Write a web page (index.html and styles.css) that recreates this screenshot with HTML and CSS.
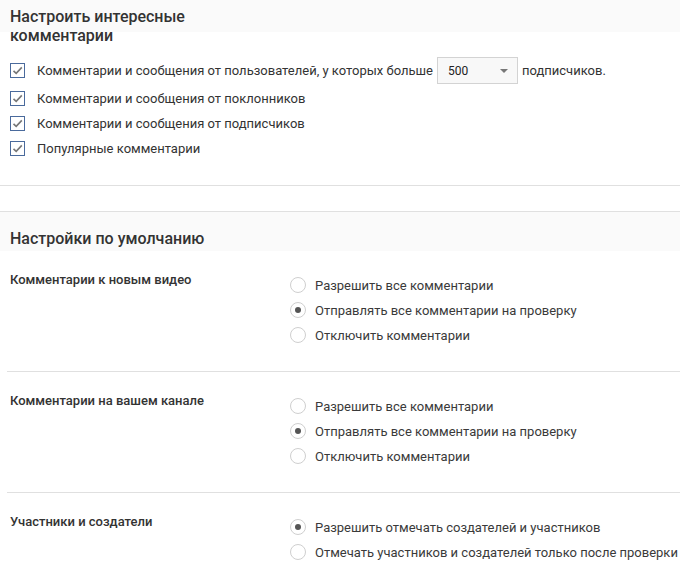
FILE: index.html
```html
<!DOCTYPE html>
<html lang="ru">
<head>
<meta charset="utf-8">
<link rel="stylesheet" href="styles.css">
</head>
<body>
<div class="head head-first"><h2 class="title title-wrap">Настроить интересные комментарии</h2></div>
<div class="checks">
  <div class="check-row check-row-tall">
    <span class="cbox"><svg width="13" height="13" viewBox="0 0 13 13"><path d="M2.5 6.8 L5.2 9.4 L10.8 3.4" fill="none" stroke="#777" stroke-width="1.6"/></svg></span>
    <span class="ctext">Комментарии и сообщения от пользователей, у которых больше</span>
    <span class="select"><span class="select-val">500</span><span class="caret"></span></span>
    <span class="ctext">подписчиков.</span>
  </div>
  <div class="check-row">
    <span class="cbox"><svg width="13" height="13" viewBox="0 0 13 13"><path d="M2.5 6.8 L5.2 9.4 L10.8 3.4" fill="none" stroke="#777" stroke-width="1.6"/></svg></span>
    <span class="ctext">Комментарии и сообщения от поклонников</span>
  </div>
  <div class="check-row">
    <span class="cbox"><svg width="13" height="13" viewBox="0 0 13 13"><path d="M2.5 6.8 L5.2 9.4 L10.8 3.4" fill="none" stroke="#777" stroke-width="1.6"/></svg></span>
    <span class="ctext">Комментарии и сообщения от подписчиков</span>
  </div>
  <div class="check-row">
    <span class="cbox"><svg width="13" height="13" viewBox="0 0 13 13"><path d="M2.5 6.8 L5.2 9.4 L10.8 3.4" fill="none" stroke="#777" stroke-width="1.6"/></svg></span>
    <span class="ctext">Популярные комментарии</span>
  </div>
</div>
<div class="spacer"></div>
<div class="head head-second"><h2 class="title">Настройки по умолчанию</h2></div>

<div class="setting">
  <div class="setting-label">Комментарии к новым видео</div>
  <div class="radios">
    <div class="radio-row"><span class="radio"></span><span>Разрешить все комментарии</span></div>
    <div class="radio-row"><span class="radio radio-on"></span><span>Отправлять все комментарии на проверку</span></div>
    <div class="radio-row"><span class="radio"></span><span>Отключить комментарии</span></div>
  </div>
</div>
<div class="setting">
  <div class="setting-label">Комментарии на вашем канале</div>
  <div class="radios">
    <div class="radio-row"><span class="radio"></span><span>Разрешить все комментарии</span></div>
    <div class="radio-row"><span class="radio radio-on"></span><span>Отправлять все комментарии на проверку</span></div>
    <div class="radio-row"><span class="radio"></span><span>Отключить комментарии</span></div>
  </div>
</div>
<div class="setting setting-last">
  <div class="setting-label">Участники и создатели</div>
  <div class="radios">
    <div class="radio-row"><span class="radio radio-on"></span><span>Разрешить отмечать создателей и участников</span></div>
    <div class="radio-row"><span class="radio"></span><span>Отмечать участников и создателей только после проверки</span></div>
  </div>
</div>
</body>
</html>
```

FILE: styles.css
```css
* { box-sizing: border-box; }
html, body { margin: 0; padding: 0; background: #fff; }
body {
  font-family: Roboto, "Liberation Sans", sans-serif;
  font-size: 13px;
  color: #333;
  overflow: hidden;
}
.head {
  background: #fafafa;
  padding: 0 10px;
}
.head-first {
  height: 32px;
  padding-top: 7px;
}
.head-second {
  height: 40px;
  padding-top: 17px;
  border-top: 1px solid #e0e0e0;
}
.title {
  margin: 0;
  font-size: 16px;
  line-height: 19px;
  font-weight: 500;
  color: #333;
}
.title-wrap { width: 200px; }
.checks {
  padding: 25px 10px 27px;
  display: flex;
  flex-direction: column;
  gap: 5px;
  border-bottom: 1px solid #e0e0e0;
}
.check-row {
  display: flex;
  align-items: center;
  height: 20px;
}
.check-row-tall { height: 27px; margin-bottom: -1px; }
.cbox {
  width: 15px;
  height: 15px;
  border: 1px solid #4a6a9c;
  background: #fff;
  display: flex;
  align-items: center;
  justify-content: center;
  margin-right: 12px;
  flex: none;
}
.cbox svg { display: block; }
.ctext { white-space: nowrap; }
.select {
  width: 81px;
  height: 27px;
  border: 1px solid #d3d3d3;
  background: #f8f8f8;
  margin: 0 4px 0 4px;
  display: flex;
  align-items: center;
  justify-content: space-between;
  padding: 0 9px 0 10px;
  font-size: 12px;
  color: #222;
}
.caret {
  width: 0;
  height: 0;
  border-left: 4px solid transparent;
  border-right: 4px solid transparent;
  border-top: 4px solid #777;
}
.spacer { height: 25px; }
.setting {
  display: grid;
  grid-template-columns: 280px 1fr;
  padding: 19px 0 26px 3px;
  border-bottom: 1px solid #e0e0e0;
  margin-left: 7px;
}
.setting:first-of-type { margin-left: 0; padding-left: 10px; }
.setting-last { border-bottom: none; }
.setting-label {
  font-weight: 500;
  line-height: 20px;
}
.radios {
  display: flex;
  flex-direction: column;
  gap: 5px;
  padding-top: 5px;
}
.radio-row {
  display: flex;
  align-items: center;
  height: 20px;
  white-space: nowrap;
  color: #3a3a3a;
}
.radio {
  width: 16px;
  height: 16px;
  border-radius: 50%;
  border: 1px solid #cfcfcf;
  background: #fff;
  margin-right: 9px;
  flex: none;
  display: flex;
  align-items: center;
  justify-content: center;
}
.radio-on::after {
  content: "";
  width: 6px;
  height: 6px;
  border-radius: 50%;
  background: #555;
}
```
